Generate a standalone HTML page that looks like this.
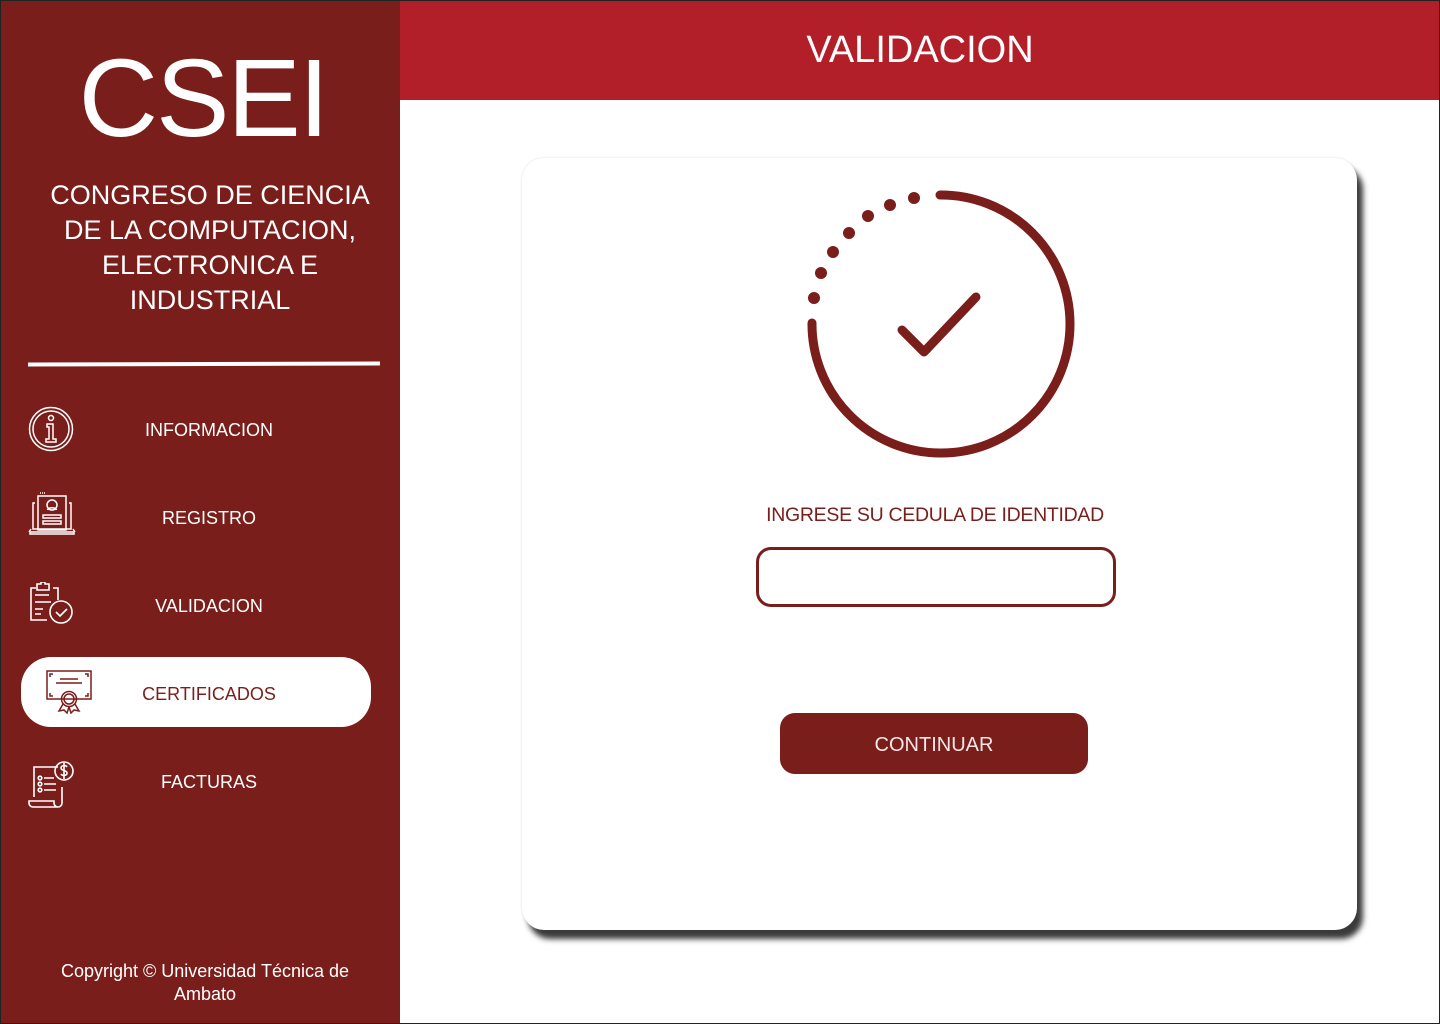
<!DOCTYPE html>
<html><head><meta charset="utf-8"><style>
*{margin:0;padding:0;box-sizing:border-box}
body{width:1440px;height:1024px;position:relative;overflow:hidden;background:#fff;font-family:"Liberation Sans",sans-serif}
.frame{position:absolute;inset:0;border:1px solid #222;pointer-events:none;z-index:9}
.side{position:absolute;left:0;top:0;width:400px;height:1024px;background:#7a1e1b;color:#fff}
.logo{position:absolute;left:0;width:406px;top:34px;text-align:center;font-size:110px;line-height:130px;letter-spacing:-2px}
.sub{position:absolute;left:0;width:420px;top:178px;text-align:center;font-size:27px;line-height:35px}
.rule{position:absolute;left:28px;top:362px;width:352px;height:4px;background:#fff;transform:rotate(-0.15deg)}
.item{position:absolute;left:0;width:418px;text-align:center;font-size:18px;color:#fff}
.sel{position:absolute;left:21px;top:657px;width:350px;height:70px;background:#fff;border-radius:30px}
.ic{position:absolute}
.copy{position:absolute;left:0;width:410px;top:960px;text-align:center;font-size:18px;line-height:23px}
.head{position:absolute;left:400px;top:0;width:1040px;height:100px;background:#b31f28;color:#fff;text-align:center;font-size:38px;line-height:100px}
.card{position:absolute;left:522px;top:158px;width:835px;height:772px;background:#fff;border-radius:22px;box-shadow:6px 9px 6px #3a3a3a,0 0 2px #ddd}
.lbl{position:absolute;left:740px;width:390px;top:504px;text-align:center;color:#7a1e1b;font-size:19.5px;letter-spacing:-0.3px}
.inp{position:absolute;left:756px;top:547px;width:360px;height:60px;border:3px solid #7a1e1b;border-radius:15px}
.btn{position:absolute;left:780px;top:713px;width:308px;height:61px;background:#7a1e1b;border-radius:15px;color:#f4e6e6;text-align:center;line-height:64px;font-size:20px}
</style></head><body>
<div class="side">
<div class="logo">CSEI</div>
<div class="sub">CONGRESO DE CIENCIA<br>DE LA COMPUTACION,<br>ELECTRONICA E<br>INDUSTRIAL</div>
<div class="rule"></div>
<div class="sel"></div>
<div class="item" style="top:420px">INFORMACION</div>
<div class="item" style="top:508px">REGISTRO</div>
<div class="item" style="top:596px">VALIDACION</div>
<div class="item" style="top:684px;color:#7a1e1b">CERTIFICADOS</div>
<div class="item" style="top:772px">FACTURAS</div>
<svg class="ic" style="left:28px;top:406px" width="48" height="48" viewBox="0 0 48 48" fill="none" stroke="#fff" stroke-width="1.5"><circle cx="23" cy="23" r="21.5"/><circle cx="23" cy="23" r="18"/><circle cx="23" cy="12" r="2.5"/><path d="M19 18h6v15h3v3h-10v-3h3v-12h-2z"/></svg>
<svg class="ic" style="left:28px;top:490px" width="48" height="46" viewBox="0 0 48 46" fill="none" stroke="#fff" stroke-width="1.5"><path d="M7 13h-2v26h38v-26h-2"/><path d="M2 42h44v2H2zM1 42l2-3M47 42l-2-3"/><path d="M10 6h28v34H10z"/><circle cx="24" cy="15" r="5"/><path d="M19.5 20c1-3 8-3 9 0"/><path d="M15 25h18v3H15zM15 31h18v3H15z"/><path d="M12 3h6" stroke-dasharray="1 1"/></svg>
<svg class="ic" style="left:28px;top:582px" width="48" height="44" viewBox="0 0 48 44" fill="none" stroke="#fff" stroke-width="1.6"><path d="M8 6H3v32h16"/><path d="M25 6h5v12"/><path d="M9 8V2h4V0h4v2h4v6z"/><path d="M7 13h14M7 20h16M7 27h8M7 32h6"/><circle cx="33" cy="30" r="11"/><path d="M28 30l4 4 7-7"/></svg>
<svg class="ic" style="left:46px;top:668px" width="48" height="48" viewBox="0 0 48 48" fill="none" stroke="#7a1e1b" stroke-width="1.5"><path d="M1 3h44v28H1z"/><path d="M4 9V6h3M42 9V6h-3M4 25v3h3M42 25v3h-3"/><path d="M14 11h18M10 15h26"/><circle cx="23" cy="31" r="5"/><circle cx="23" cy="31" r="7.5"/><path d="M17 36l-4 7 5-1 3 3 2-6M29 36l4 7-5-1-3 3-2-6"/></svg>
<svg class="ic" style="left:28px;top:757px" width="48" height="52" viewBox="0 0 48 52" fill="none" stroke="#fff" stroke-width="1.6"><path d="M6 40V10h24"/><path d="M34 30v16a4 4 0 0 1-8 0v-2H1v2a4 4 0 0 0 4 4h25"/><circle cx="36" cy="14" r="9"/><path d="M39 10c-1-2-6-2-6 1s6 2 6 5-5 3-6 1M36 6v16"/><circle cx="12" cy="21" r="1.8"/><circle cx="12" cy="27" r="1.8"/><circle cx="12" cy="33" r="1.8"/><path d="M16 21h10M16 27h12M16 33h12"/></svg>
<div class="copy">Copyright © Universidad Técnica de<br>Ambato</div>
</div>
<div class="head">VALIDACION</div>
<div class="card"></div>
<svg style="position:absolute;left:780px;top:170px" width="320" height="310" viewBox="780 170 320 310" fill="none" stroke="#7a1e1b" stroke-linecap="round">
<path d="M940 195 A129 129 0 1 1 812 323" stroke-width="9"/>
<g fill="#7a1e1b" stroke="none"><circle cx="914" cy="198" r="6"/><circle cx="890" cy="205" r="6"/><circle cx="868" cy="216" r="6"/><circle cx="849" cy="233" r="6"/><circle cx="833" cy="252" r="6"/><circle cx="821" cy="273" r="6"/><circle cx="814" cy="298" r="6"/></g>
<path d="M902 330 L924 352 L976 297" stroke-width="9" stroke-linejoin="round"/>
</svg>
<div class="lbl">INGRESE SU CEDULA DE IDENTIDAD</div>
<div class="inp"></div>
<div class="btn">CONTINUAR</div>
<div class="frame"></div>
</body></html>
